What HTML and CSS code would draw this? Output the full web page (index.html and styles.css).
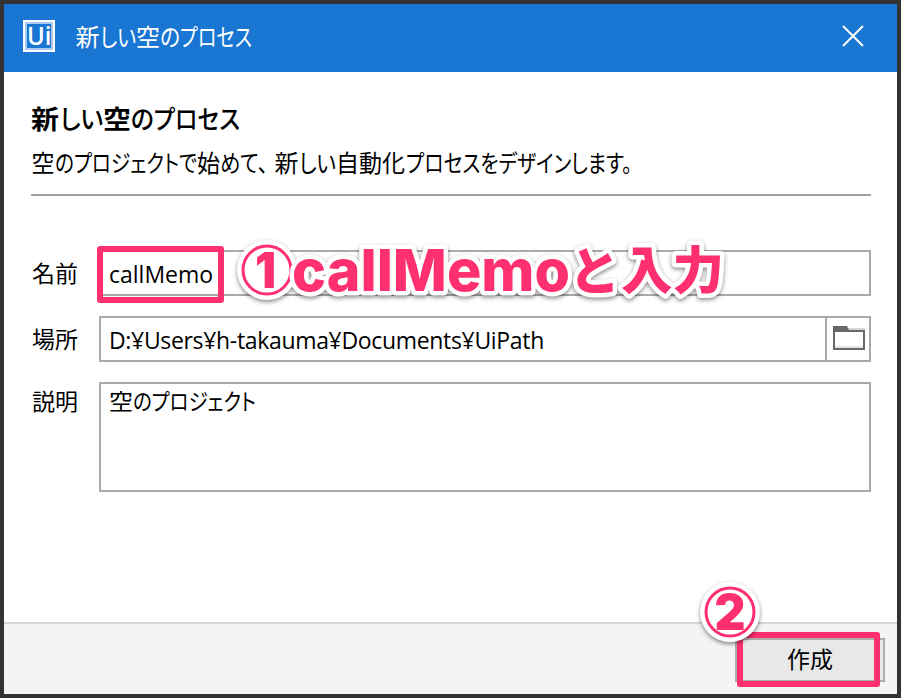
FILE: index.html
```html
<!DOCTYPE html>
<html lang="ja">
<head>
<meta charset="utf-8">
<title>新しい空のプロセス</title>
<link rel="stylesheet" href="styles.css">
</head>
<body>
<div class="window">
  <header class="titlebar">
    <svg class="logo" width="32" height="32" viewBox="0 0 32 32">
      <rect x="1" y="1" width="30" height="30" fill="none" stroke="#fff" stroke-width="2"/>
      <rect x="3" y="3" width="26" height="26" fill="none" stroke="#a9cbef" stroke-width="2"/>
      <text class="logo-text" x="4" y="24.5" textLength="24.5" lengthAdjust="spacingAndGlyphs">Ui</text>
    </svg>
    <svg class="line title" width="180" height="36" viewBox="0 0 180 36">
      <text x="0.5" y="28" textLength="24" lengthAdjust="spacingAndGlyphs">新</text>
      <text x="25" y="28" textLength="36" lengthAdjust="spacingAndGlyphs">しい</text>
      <text x="61" y="28" textLength="24" lengthAdjust="spacingAndGlyphs">空</text>
      <text x="85" y="28" textLength="20" lengthAdjust="spacingAndGlyphs">の</text>
      <text x="105" y="28" textLength="72" lengthAdjust="spacingAndGlyphs">プロセス</text>
    </svg>
    <svg class="close" width="22" height="22" viewBox="0 0 22 22"><path d="M1 1L21 21M21 1L1 21"/></svg>
  </header>
  <main class="content">
    <h1 class="heading">
      <svg class="line" width="220" height="40" viewBox="0 0 220 40">
        <text class="strong" x="0" y="30" textLength="28" lengthAdjust="spacingAndGlyphs">新</text>
        <text x="29" y="30" textLength="43" lengthAdjust="spacingAndGlyphs">しい</text>
        <text class="strong" x="72" y="30" textLength="28" lengthAdjust="spacingAndGlyphs">空</text>
        <text x="100" y="30" textLength="23" lengthAdjust="spacingAndGlyphs">の</text>
        <text x="123" y="30" textLength="86" lengthAdjust="spacingAndGlyphs">プロセス</text>
      </svg>
    </h1>
    <p class="subtitle">
      <svg class="line" width="620" height="38" viewBox="0 0 620 38">
        <text x="0.5" y="28" textLength="23" lengthAdjust="spacingAndGlyphs">空</text>
        <text x="24" y="28" textLength="142" lengthAdjust="spacingAndGlyphs">のプロジェクトで</text>
        <text x="166" y="28" textLength="23" lengthAdjust="spacingAndGlyphs">始</text>
        <text x="189" y="28" textLength="48" lengthAdjust="spacingAndGlyphs">めて、</text>
        <text x="243.5" y="28" textLength="24" lengthAdjust="spacingAndGlyphs">新</text>
        <text x="268" y="28" textLength="37" lengthAdjust="spacingAndGlyphs">しい</text>
        <text x="305" y="28" textLength="69" lengthAdjust="spacingAndGlyphs">自動化</text>
        <text x="375" y="28" textLength="226" lengthAdjust="spacingAndGlyphs">プロセスをデザインします。</text>
      </svg>
    </p>
    <hr class="rule">
    <div class="form">
      <label class="label">名前</label>
      <div class="field"><span class="name-value">callMemo</span></div>
      <label class="label">場所</label>
      <div class="field">
        <span class="path-value">D:¥Users¥h-takauma¥Documents¥UiPath</span>
        <span class="browse">
          <svg width="32" height="24" viewBox="0 0 32 24">
            <path d="M14 2H32V4H14z" fill="#d4d4d4"/>
            <path d="M1 5H31V23H1z" fill="#fff" stroke="#686868" stroke-width="2"/>
            <path d="M0 0H14L16 4H0z" fill="#686868"/>
            <path d="M2 21H30" stroke="#e4e4e4" stroke-width="2"/>
          </svg>
        </span>
      </div>
      <label class="label label-top">説明</label>
      <div class="field area">
        <svg class="line" width="160" height="36" viewBox="0 0 160 36">
          <text x="0" y="26" textLength="24" lengthAdjust="spacingAndGlyphs">空</text>
          <text x="24" y="26" textLength="123" lengthAdjust="spacingAndGlyphs">のプロジェクト</text>
        </svg>
      </div>
    </div>
  </main>
  <footer class="footer"><div class="button">作成</div></footer>
</div>
<div class="highlight highlight-name"></div>
<svg class="note note-name" width="530" height="90" viewBox="0 0 530 90">
  <circle class="disc" cx="37" cy="35" r="30"/>
  <circle class="ring" cx="37" cy="35" r="24"/>
  <text class="digit" x="25" y="53" textLength="21" lengthAdjust="spacingAndGlyphs">1</text>
  <text class="note-latin" x="62" y="56" textLength="278" lengthAdjust="spacingAndGlyphs">callMemo</text>
  <text class="note-jp" x="339" y="55" textLength="51" lengthAdjust="spacingAndGlyphs">と</text>
  <text class="note-jp" x="391" y="54" textLength="103" lengthAdjust="spacingAndGlyphs">入力</text>
</svg>
<div class="highlight highlight-create"></div>
<svg class="note note-create" width="80" height="80" viewBox="0 0 80 80">
  <circle class="disc" cx="40" cy="42" r="30"/>
  <circle class="ring" cx="40" cy="42" r="24"/>
  <text class="digit" x="24.5" y="60" textLength="31" lengthAdjust="spacingAndGlyphs">2</text>
</svg>
</body>
</html>
```
FILE: styles.css
```css
* { box-sizing: border-box; }
body {
  margin: 0;
  height: 698px;
  position: relative;
  overflow: hidden;
  background: #333;
  color: #000;
  font-family: "Open Sans", "Noto Sans CJK JP", sans-serif;
  font-size: 23px;
}
.window {
  height: 698px;
  border: 4px solid #333;
  background: #fff;
  display: flex;
  flex-direction: column;
}
.line {
  display: block;
  overflow: visible;
  font: 400 23px "Noto Sans CJK JP", sans-serif;
  font-feature-settings: "palt";
}
.titlebar {
  height: 68px;
  padding: 0 33px 4px 19px;
  background: #1976d2;
  color: #fff;
  display: flex;
  align-items: center;
}
.logo { overflow: visible; }
.logo-text { font: 600 25px "Open Sans", sans-serif; fill: #fff; }
.title { margin-left: 20px; font-size: 24px; fill: #fff; }
.close { margin-left: auto; }
.close path { stroke: #fff; stroke-width: 2; fill: none; }
.content { flex: 1; padding: 27px 26px 0 27px; }
.heading { margin: 0; height: 40px; }
.heading .line { font-size: 26px; font-weight: 500; }
.heading .strong { font-weight: 700; }
.subtitle { margin: 5px 0 0; height: 38px; }
.subtitle .line { font-size: 24px; }
.rule { height: 2px; margin: 12px 0 54px; border: 0; background: #a0a0a0; }
.form { display: grid; grid-template-columns: 68px 1fr; row-gap: 20px; }
.label { height: 46px; padding-left: 1px; font: 400 23px/44px "Noto Sans CJK JP", sans-serif; }
.label-top { line-height: 36px; }
.field {
  height: 46px;
  border: 2px solid #aaa;
  padding-left: 8px;
  display: flex;
  align-items: center;
  justify-content: space-between;
}
.name-value, .path-value { position: relative; top: 1px; }
.path-value { letter-spacing: -0.33px; }
.browse {
  width: 44px;
  height: 42px;
  border-left: 2px solid #aaa;
  padding: 8px 0 0 6px;
  line-height: 0;
}
.area { height: 110px; align-items: flex-start; }
.footer {
  height: 72px;
  border-top: 2px solid #d5d5d5;
  background: #f4f4f4;
  padding: 14px 12px 0 0;
  display: flex;
  justify-content: flex-end;
}
.button {
  width: 150px;
  height: 44px;
  border: 2px solid #adadad;
  background: #e8e8e8;
  text-align: center;
  font: 400 23px/37px "Noto Sans CJK JP", sans-serif;
}
.highlight { position: absolute; border: 6px solid #ff306f; border-radius: 3px; }
.highlight-name { left: 97px; top: 246px; width: 127px; height: 57px; }
.highlight-create { left: 737px; top: 632px; width: 143px; height: 55px; }
.note { position: absolute; overflow: visible; filter: drop-shadow(0 2px 2px rgba(0, 0, 0, 0.45)); }
.note-name { left: 230px; top: 235px; }
.note-create { left: 690px; top: 570px; }
.disc { fill: #fff; }
.ring { fill: none; stroke: #ff306f; stroke-width: 3; }
.digit { font: 900 49px Inter, sans-serif; fill: #ff306f; }
.note-latin, .note-jp {
  fill: #ff306f;
  stroke: #fff;
  stroke-width: 9px;
  stroke-linejoin: round;
  paint-order: stroke;
}
.note-latin { font: 800 58px Inter, sans-serif; }
.note-jp { font: 900 51px "Noto Sans CJK JP", sans-serif; }
```
